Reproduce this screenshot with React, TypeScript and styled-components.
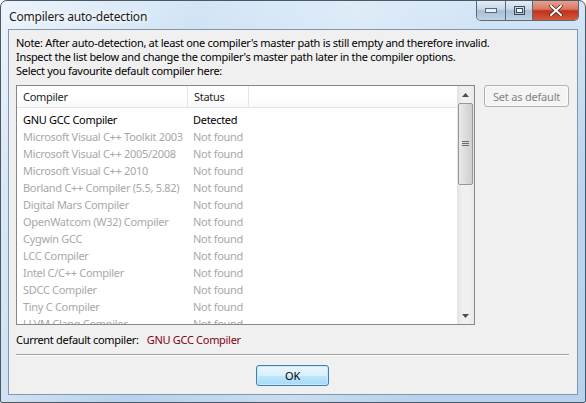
import styled, { createGlobalStyle } from "styled-components";

const GlobalStyle = createGlobalStyle`
  html, body {
    margin: 0;
    padding: 0;
    background: #ffffff;
  }
  body {
    font-family: "Noto Sans", "DejaVu Sans", sans-serif;
    font-size: 11px;
    letter-spacing: -0.3px;
  }
`;

type Compiler = { name: string; status: string; found: boolean };

const compilers: Compiler[] = [
  { name: "GNU GCC Compiler", status: "Detected", found: true },
  { name: "Microsoft Visual C++ Toolkit 2003", status: "Not found", found: false },
  { name: "Microsoft Visual C++ 2005/2008", status: "Not found", found: false },
  { name: "Microsoft Visual C++ 2010", status: "Not found", found: false },
  { name: "Borland C++ Compiler (5.5, 5.82)", status: "Not found", found: false },
  { name: "Digital Mars Compiler", status: "Not found", found: false },
  { name: "OpenWatcom (W32) Compiler", status: "Not found", found: false },
  { name: "Cygwin GCC", status: "Not found", found: false },
  { name: "LCC Compiler", status: "Not found", found: false },
  { name: "Intel C/C++ Compiler", status: "Not found", found: false },
  { name: "SDCC Compiler", status: "Not found", found: false },
  { name: "Tiny C Compiler", status: "Not found", found: false },
  { name: "LLVM Clang Compiler", status: "Not found", found: false },
];

const Frame = styled.div`
  width: 586px;
  height: 403px;
  box-sizing: border-box;
  border: 1px solid #4a5866;
  border-radius: 7px 7px 2px 2px;
  background:
    linear-gradient(100deg, rgba(255, 255, 255, 0.55) 0%, rgba(255, 255, 255, 0) 30%, rgba(255, 255, 255, 0.25) 55%, rgba(255, 255, 255, 0) 75%),
    linear-gradient(180deg, #d4e6f6 0%, #bcd6ee 40%, #b7d2ec 100%);
  display: flex;
  flex-direction: column;
  overflow: hidden;
`;

const TitleBar = styled.div`
  height: 28px;
  display: flex;
  align-items: flex-start;
  justify-content: space-between;
  padding-left: 8px;
`;

const Title = styled.div`
  padding-top: 7px;
  font-size: 12px;
  letter-spacing: -0.2px;
  color: #1a1a1a;
  text-shadow: 0 0 6px #ffffff, 0 0 8px #ffffff, 0 0 10px #ffffff;
`;

const Caption = styled.div`
  display: flex;
  margin-right: 6px;
  margin-top: -1px;
  height: 20px;
  border: 1px solid #5b6878;
  border-top: none;
  border-radius: 0 0 5px 5px;
  overflow: hidden;
`;

const CaptionButton = styled.div<{ $w: number; $close?: boolean }>`
  width: ${(p) => p.$w}px;
  display: flex;
  align-items: center;
  justify-content: center;
  background: ${(p) =>
    p.$close
      ? "linear-gradient(180deg, #e8a493 0%, #d77a66 45%, #c3301b 55%, #d35a40 100%)"
      : "linear-gradient(180deg, #e6eef6 0%, #c9d9e8 45%, #a9bfd4 55%, #bed3e4 100%)"};
  & + & {
    border-left: 1px solid #5b6878;
  }
`;

const Client = styled.div`
  flex: 1;
  margin: 0 7px 7px 7px;
  border: 1px solid #8297ac;
  background: #f0f0f0;
  padding: 6px 8px 0 7px;
  display: flex;
  flex-direction: column;
`;

const Note = styled.div`
  line-height: 14px;
  color: #000;
`;

const MainRow = styled.div`
  display: flex;
  align-items: flex-start;
  gap: 9px;
  margin-top: 7px;
`;

const ListBox = styled.div`
  width: 461px;
  height: 240px;
  box-sizing: border-box;
  border: 1px solid #828790;
  background: #ffffff;
  display: flex;
  overflow: hidden;
`;

const Grid = styled.div`
  flex: 1;
  display: flex;
  flex-direction: column;
  overflow: hidden;
`;

const Header = styled.div`
  height: 21px;
  display: flex;
  border-bottom: 1px solid #e5e5e5;
  background: linear-gradient(180deg, #ffffff 0%, #ffffff 60%, #f7f8f9 100%);
`;

const HeaderCell = styled.div<{ $w?: number }>`
  width: ${(p) => (p.$w ? `${p.$w}px` : "auto")};
  flex: ${(p) => (p.$w ? "none" : "1")};
  box-sizing: border-box;
  padding-left: 6px;
  line-height: 22px;
  color: #1e1e1e;
  border-right: ${(p) => (p.$w ? "1px solid #e5e5e5" : "none")};
`;

const Body = styled.div`
  padding-top: 3px;
`;

const Row = styled.div<{ $found: boolean }>`
  display: flex;
  height: 17px;
  line-height: 17px;
  color: ${(p) => (p.$found ? "#000000" : "#a8a8a8")};
  white-space: nowrap;
`;

const Cell = styled.div<{ $w: number }>`
  width: ${(p) => p.$w}px;
  box-sizing: border-box;
  padding-left: 6px;
  overflow: hidden;
`;

const ScrollBar = styled.div`
  width: 17px;
  display: flex;
  flex-direction: column;
  background: linear-gradient(90deg, #e3e3e3 0%, #f0f0f0 30%, #f0f0f0 70%, #e8e8e8 100%);
`;

const Arrow = styled.div`
  height: 17px;
  display: flex;
  align-items: center;
  justify-content: center;
`;

const Thumb = styled.div`
  height: 80px;
  margin: 0 1px;
  border: 1px solid #979797;
  border-radius: 2px;
  background: linear-gradient(90deg, #eaeaea 0%, #dcdcdc 50%, #cfcfcf 100%);
  display: flex;
  align-items: center;
  justify-content: center;
`;

const Track = styled.div`
  flex: 1;
`;

const Side = styled.div`
  display: flex;
  flex-direction: column;
`;

const Button = styled.button<{ $default?: boolean }>`
  font-family: "Noto Sans", sans-serif;
  font-size: 11px;
  letter-spacing: -0.2px;
  box-sizing: border-box;
  border-radius: 3px;
  padding: 0;
  cursor: default;
  border: 1px solid ${(p) => (p.$default ? "#3c7fb1" : "#adb2b5")};
  color: ${(p) => (p.$default ? "#000000" : "#838383")};
  background: ${(p) =>
    p.$default
      ? "linear-gradient(180deg, #eaf6fd 0%, #d9f0fc 50%, #bee6fd 51%, #a7d9f5 100%)"
      : "#f4f4f4"};
  box-shadow: ${(p) => (p.$default ? "inset 0 0 0 1px #c8e8f9" : "inset 0 0 0 1px #fbfbfb")};
`;

const SetDefault = styled(Button)`
  width: 85px;
  height: 22px;
`;

const OkButton = styled(Button)`
  width: 73px;
  height: 21px;
`;

const CurrentRow = styled.div`
  display: flex;
  gap: 8px;
  margin-top: 8px;
  line-height: 14px;
`;

const Current = styled.span`
  color: #800020;
`;

const Separator = styled.div`
  margin-top: 7px;
  height: 0;
  border-top: 1px solid #a0a0a0;
  border-bottom: 1px solid #ffffff;
`;

const Footer = styled.div`
  display: flex;
  justify-content: center;
  padding-top: 9px;
`;

export default function App() {
  return (
    <>
      <GlobalStyle />
      <Frame>
        <TitleBar>
          <Title>Compilers auto-detection</Title>
          <Caption>
            <CaptionButton $w={28}>
              <svg width="12" height="5" viewBox="0 0 12 5">
                <rect x="0.5" y="0.5" width="11" height="4" fill="#e9f0f6" stroke="#55677a" />
              </svg>
            </CaptionButton>
            <CaptionButton $w={26}>
              <svg width="11" height="9" viewBox="0 0 11 9">
                <rect x="0.5" y="0.5" width="10" height="8" fill="none" stroke="#3a4a5c" />
                <rect x="2.5" y="2.5" width="6" height="4" fill="#ffffff" stroke="#3a4a5c" />
              </svg>
            </CaptionButton>
            <CaptionButton $w={45} $close>
              <svg width="14" height="11" viewBox="0 0 14 11">
                <path d="M2 1 L12 10 M12 1 L2 10" stroke="#4a2020" strokeWidth="3.4" strokeLinecap="round" />
                <path d="M2 1 L12 10 M12 1 L2 10" stroke="#ffffff" strokeWidth="2" strokeLinecap="round" />
              </svg>
            </CaptionButton>
          </Caption>
        </TitleBar>
        <Client>
          <Note>
            Note: After auto-detection, at least one compiler's master path is still empty and therefore invalid.
            <br />
            Inspect the list below and change the compiler's master path later in the compiler options.
            <br />
            Select you favourite default compiler here:
          </Note>
          <MainRow>
            <ListBox>
              <Grid>
                <Header>
                  <HeaderCell $w={171}>Compiler</HeaderCell>
                  <HeaderCell $w={61}>Status</HeaderCell>
                  <HeaderCell />
                </Header>
                <Body>
                  {compilers.map((c) => (
                    <Row key={c.name} $found={c.found}>
                      <Cell $w={170}>{c.name}</Cell>
                      <Cell $w={80}>{c.status}</Cell>
                    </Row>
                  ))}
                </Body>
              </Grid>
              <ScrollBar>
                <Arrow>
                  <svg width="7" height="4" viewBox="0 0 7 4">
                    <path d="M0 4 L3.5 0 L7 4 Z" fill="#4d4d4d" />
                  </svg>
                </Arrow>
                <Thumb>
                  <svg width="7" height="6" viewBox="0 0 7 6">
                    <path d="M0 0.5 H7 M0 2.5 H7 M0 4.5 H7" stroke="#6b6b6b" strokeWidth="1" />
                  </svg>
                </Thumb>
                <Track />
                <Arrow>
                  <svg width="7" height="4" viewBox="0 0 7 4">
                    <path d="M0 0 L7 0 L3.5 4 Z" fill="#4d4d4d" />
                  </svg>
                </Arrow>
              </ScrollBar>
            </ListBox>
            <Side>
              <SetDefault disabled>Set as default</SetDefault>
            </Side>
          </MainRow>
          <CurrentRow>
            <span>Current default compiler:</span>
            <Current>GNU GCC Compiler</Current>
          </CurrentRow>
          <Separator />
          <Footer>
            <OkButton $default>OK</OkButton>
          </Footer>
        </Client>
      </Frame>
    </>
  );
}
